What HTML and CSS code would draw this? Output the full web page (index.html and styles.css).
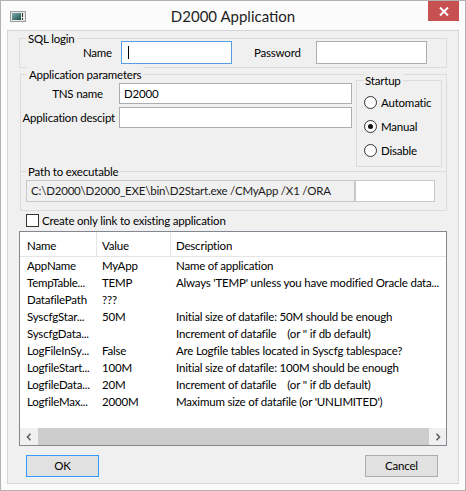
FILE: index.html
```html
<!DOCTYPE html>
<html>
<head>
<meta charset="utf-8">
<title>D2000 Application</title>
<link rel="stylesheet" href="styles.css">
</head>
<body>
<div class="window">
  <div class="titlebar">
    <svg class="appicon" width="16" height="11" viewBox="0 0 16 11">
      <defs>
        <linearGradient id="ig" x1="0" y1="0" x2="1" y2="1">
          <stop offset="0" stop-color="#7fb3ad"/>
          <stop offset="1" stop-color="#1f4d4a"/>
        </linearGradient>
      </defs>
      <rect x="0.5" y="0.5" width="15" height="10" fill="#e9e9e9" stroke="#9c9c9c"/>
      <rect x="2" y="2" width="9" height="7" fill="url(#ig)"/>
      <rect x="12" y="2" width="1" height="4" fill="#2b2b2b"/>
      <rect x="12" y="7" width="1" height="2" fill="#2b2b2b"/>
    </svg>
    <div class="title">D2000 Application</div>
    <div class="close">
      <svg width="10" height="9" viewBox="0 0 10 9"><path d="M1 0.5 L9 8.5 M9 0.5 L1 8.5" stroke="#fff" stroke-width="2"/></svg>
    </div>
  </div>

  <div class="client">
    <div class="group sql">
      <span class="gtitle">SQL login</span>
      <div class="sql-row">
        <span class="lbl-name">Name</span>
        <div class="input focus"><span class="caret"></span></div>
        <span class="lbl-pw">Password</span>
        <div class="input"></div>
      </div>
    </div>

    <div class="group app">
      <span class="gtitle">Application parameters</span>
      <div class="app-top">
        <div class="fields">
          <div class="frow"><span class="flabel tns-lbl">TNS name</span><div class="input wide">D2000</div></div>
          <div class="frow"><span class="flabel desc-lbl">Application descipt</span><div class="input wide"></div></div>
        </div>
        <div class="group startup">
          <span class="gtitle">Startup</span>
          <div class="radio-row"><span class="radio"></span><span>Automatic</span></div>
          <div class="radio-row"><span class="radio on"></span><span>Manual</span></div>
          <div class="radio-row"><span class="radio"></span><span>Disable</span></div>
        </div>
      </div>
      <div class="group path">
        <span class="gtitle">Path to executable</span>
        <div class="path-row">
          <div class="pbox">C:\D2000\D2000_EXE\bin\D2Start.exe /CMyApp /X1 /ORA</div>
          <div class="pbox2"></div>
        </div>
      </div>
    </div>

    <div class="checkrow">
      <span class="checkbox"></span>
      <span class="checklabel">Create only link to existing application</span>
    </div>

    <div class="list">
      <div class="lhead">
        <div class="c1">Name</div>
        <div class="c2">Value</div>
        <div class="c3">Description</div>
      </div>
      <div class="lbody">
        <div class="lrow"><div class="c1">AppName</div><div class="c2">MyApp</div><div class="c3">Name of application</div></div>
        <div class="lrow"><div class="c1">TempTable...</div><div class="c2">TEMP</div><div class="c3">Always 'TEMP' unless you have modified Oracle data...</div></div>
        <div class="lrow"><div class="c1">DatafilePath</div><div class="c2">???</div><div class="c3"></div></div>
        <div class="lrow"><div class="c1">SyscfgStar...</div><div class="c2">50M</div><div class="c3">Initial size of datafile: 50M should be enough</div></div>
        <div class="lrow"><div class="c1">SyscfgData...</div><div class="c2"></div><div class="c3">Increment of datafile    (or '' if db default)</div></div>
        <div class="lrow"><div class="c1">LogFileInSy...</div><div class="c2">False</div><div class="c3">Are Logfile tables located in Syscfg tablespace?</div></div>
        <div class="lrow"><div class="c1">LogfileStart...</div><div class="c2">100M</div><div class="c3">Initial size of datafile: 100M should be enough</div></div>
        <div class="lrow"><div class="c1">LogfileData...</div><div class="c2">20M</div><div class="c3">Increment of datafile    (or '' if db default)</div></div>
        <div class="lrow"><div class="c1">LogfileMax...</div><div class="c2">2000M</div><div class="c3">Maximum size of datafile (or 'UNLIMITED')</div></div>
      </div>
      <div class="hscroll">
        <div class="sbtn"><svg width="6" height="8" viewBox="0 0 6 8"><path d="M4.5 0.8 L1.5 4 L4.5 7.2" fill="none" stroke="#606060" stroke-width="1.6"/></svg></div>
        <div class="thumb"></div>
        <div class="sbtn"><svg width="6" height="8" viewBox="0 0 6 8"><path d="M1.5 0.8 L4.5 4 L1.5 7.2" fill="none" stroke="#606060" stroke-width="1.6"/></svg></div>
      </div>
    </div>

    <div class="buttons">
      <div class="btn default">OK</div>
      <div class="btn">Cancel</div>
    </div>
  </div>
</div>
</body>
</html>
```

FILE: styles.css
```css
* { box-sizing: border-box; }

body {
  margin: 0;
  background: #ffffff;
  font-family: Lato, "Liberation Sans", sans-serif;
  font-size: 11.5px;
  letter-spacing: -0.2px;
  color: #000;
}

.window {
  width: 466px;
  height: 491px;
  border: 1px solid #b2b2b2;
  background: #fbfbfb;
  display: flex;
  flex-direction: column;
}

.titlebar {
  height: 29px;
  flex: none;
  display: grid;
  grid-template-columns: 1fr auto 1fr;
}

.appicon {
  margin: 10px 0 0 9px;
}

.title {
  font-size: 15px;
  letter-spacing: 0;
  line-height: 20px;
  padding-top: 5px;
  color: #1e1e1e;
}

.close {
  justify-self: end;
  width: 31px;
  height: 20px;
  margin-right: 6px;
  background: #c75050;
  display: flex;
  align-items: center;
  justify-content: center;
}

.client {
  flex: 1;
  margin: 0 6px 6px 6px;
  border: 1px solid #d6d6d6;
  background: #f0f0f0;
  padding: 0 11px;
  display: flex;
  flex-direction: column;
}

.group {
  position: relative;
  border: 1px solid #dcdcdc;
}

.gtitle {
  position: absolute;
  top: -8px;
  left: 6px;
  padding: 0 2px;
  line-height: 15px;
  background: #f0f0f0;
  white-space: nowrap;
}

.input {
  height: 23px;
  width: 111px;
  border: 1px solid #abadb3;
  background: #fff;
  padding-left: 4px;
  line-height: 19px;
}

.input.focus {
  border-color: #569de5;
  padding-left: 6px;
  padding-top: 4px;
}

.caret {
  display: block;
  width: 1px;
  height: 13px;
  background: #000;
}

/* SQL login */
.sql {
  margin-top: 7px;
  height: 30px;
  padding-top: 2px;
}

.sql-row {
  display: flex;
  align-items: center;
}

.lbl-name {
  width: 92px;
  text-align: right;
  margin-right: 9px;
}

.lbl-pw {
  width: 62px;
  margin-left: 22px;
}

/* Application parameters */
.app {
  margin: 6px 0 0 1px;
  height: 137px;
}

.app-top {
  display: flex;
}

.fields {
  width: 331px;
  padding-top: 8px;
  display: flex;
  flex-direction: column;
  gap: 3px;
}

.frow {
  display: flex;
  align-items: center;
}

.flabel {
  width: 98px;
  text-align: right;
  white-space: nowrap;
}

.tns-lbl { padding-right: 16px; }
.desc-lbl { padding-right: 4px; }

.input.wide {
  width: 233px;
  height: 21px;
}

.startup {
  margin: 5px 0 0 4px;
  width: 86px;
  height: 87px;
  padding: 9px 0 0 7px;
}

.radio-row {
  height: 24px;
  display: flex;
  align-items: center;
  gap: 4px;
}

.radio {
  width: 13px;
  height: 13px;
  border-radius: 50%;
  border: 1px solid #333;
  background: #fff;
  display: flex;
  align-items: center;
  justify-content: center;
}

.radio.on::after {
  content: "";
  width: 5px;
  height: 5px;
  border-radius: 50%;
  background: #111;
}

.path {
  margin: 4px -1px -1px -1px;
  height: 40px;
  padding: 8px 0 0 5px;
}

.path .gtitle { left: 5px; }

.path-row {
  display: flex;
}

.pbox {
  width: 329px;
  height: 22px;
  border: 1px solid #c8c8c8;
  background: #f0f0f0;
  padding-left: 4px;
  line-height: 20px;
  color: #1a1a1a;
  white-space: nowrap;
  overflow: hidden;
}

.pbox2 {
  width: 80px;
  height: 22px;
  border: 1px solid #c8c8c8;
  background: #fff;
}

/* checkbox */
.checkrow {
  height: 20px;
  padding: 3px 0 0 7px;
  display: flex;
  align-items: flex-start;
  gap: 3px;
}

.checkbox {
  width: 13px;
  height: 13px;
  border: 1px solid #333;
  background: #fff;
}

.checklabel {
  line-height: 13px;
}

/* list */
.list {
  height: 215px;
  border: 1px solid #828790;
  background: #fff;
  display: flex;
  flex-direction: column;
}

.lhead, .lrow {
  display: grid;
  grid-template-columns: 77px 74px 1fr;
}

.lhead {
  height: 25px;
  border-bottom: 1px solid #e5e5e5;
}

.lhead > div {
  padding-top: 3px;
  display: flex;
  align-items: center;
}

.lhead .c1, .lhead .c2 {
  border-right: 1px solid #e5e5e5;
}

.c1 { padding-left: 7px; }
.c2, .c3 { padding-left: 5px; }

.lbody {
  flex: 1;
}

.lrow {
  height: 17px;
  line-height: 17px;
}

.lrow > div {
  white-space: pre;
  overflow: hidden;
}

.hscroll {
  height: 17px;
  background: #f0f0f0;
  display: flex;
}

.sbtn {
  width: 17px;
  display: flex;
  align-items: center;
  justify-content: center;
}

.thumb {
  flex: 1;
  margin-left: 1px;
  background: #cdcdcd;
}

/* buttons */
.buttons {
  margin-top: 9px;
  display: flex;
  justify-content: space-between;
  padding: 0 9px 0 7px;
}

.btn {
  width: 73px;
  height: 22px;
  border: 1px solid #adadad;
  background: #e1e1e1;
  text-align: center;
  line-height: 20px;
}

.btn.default {
  border-color: #3399ff;
}
```
